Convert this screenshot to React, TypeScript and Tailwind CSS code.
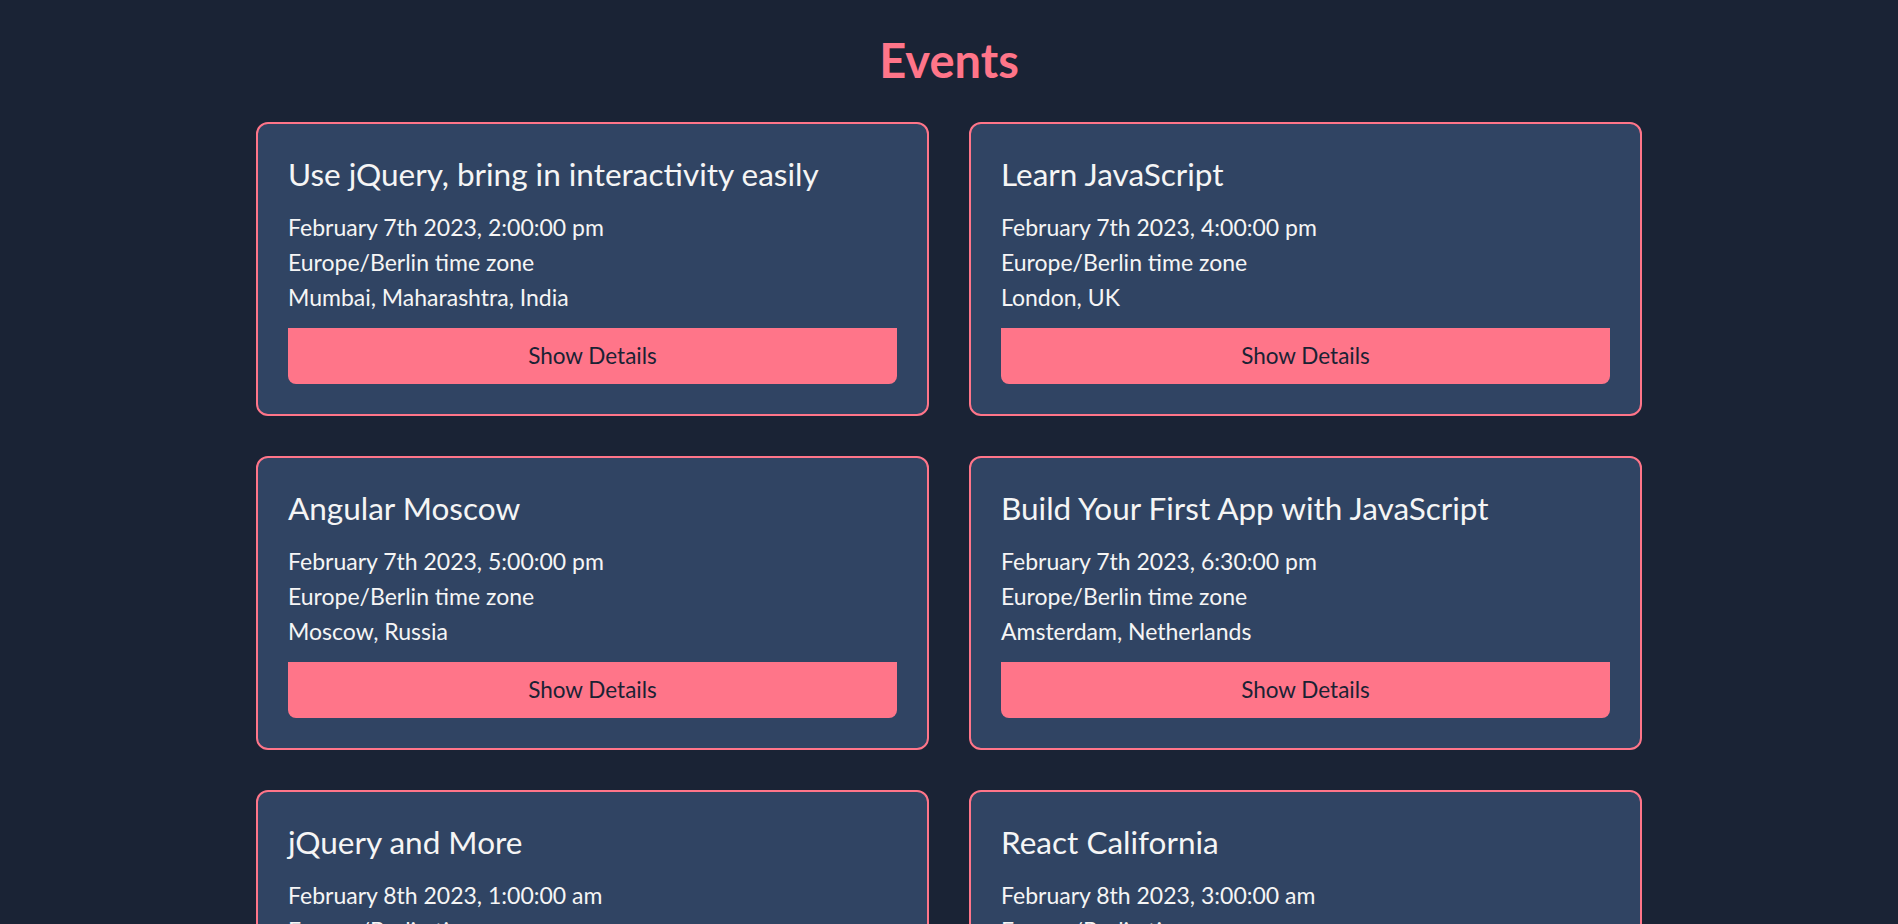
const events = [
  {
    title: 'Use jQuery, bring in interactivity easily',
    date: 'February 7th 2023, 2:00:00 pm',
    location: 'Mumbai, Maharashtra, India',
  },
  {
    title: 'Learn JavaScript',
    date: 'February 7th 2023, 4:00:00 pm',
    location: 'London, UK',
  },
  {
    title: 'Angular Moscow',
    date: 'February 7th 2023, 5:00:00 pm',
    location: 'Moscow, Russia',
  },
  {
    title: 'Build Your First App with JavaScript',
    date: 'February 7th 2023, 6:30:00 pm',
    location: 'Amsterdam, Netherlands',
  },
  {
    title: 'jQuery and More',
    date: 'February 8th 2023, 1:00:00 am',
    location: 'Berlin, Germany',
  },
  {
    title: 'React California',
    date: 'February 8th 2023, 3:00:00 am',
    location: 'San Francisco, CA, USA',
  },
]

function EventCard({ title, date, location }: { title: string; date: string; location: string }) {
  return (
    <div className="bg-[#304463] border-2 border-[#ff7589] rounded-xl p-[30px] text-[#f5f5f5]">
      <h2 className="text-[31.5px] leading-[40px]">{title}</h2>
      <div className="mt-[16px] text-[23px] leading-[35px]">
        <p>{date}</p>
        <p>Europe/Berlin time zone</p>
        <p>{location}</p>
      </div>
      <button className="mt-[13px] w-full h-[56px] bg-[#ff7589] text-[#1a2234] text-[22.5px] rounded-b-lg">
        Show Details
      </button>
    </div>
  )
}

export default function App() {
  return (
    <div className="min-h-screen bg-[#1a2335] font-['Lato','Open_Sans',sans-serif] pb-10">
      <h1 className="pt-[32px] text-center text-[47px] leading-[56px] font-bold text-[#ff7589]">
        Events
      </h1>
      <div className="w-[1386px] mx-auto mt-[34px] grid grid-cols-2 gap-x-10 gap-y-10">
        {events.map((event) => (
          <EventCard key={event.title} {...event} />
        ))}
      </div>
    </div>
  )
}
